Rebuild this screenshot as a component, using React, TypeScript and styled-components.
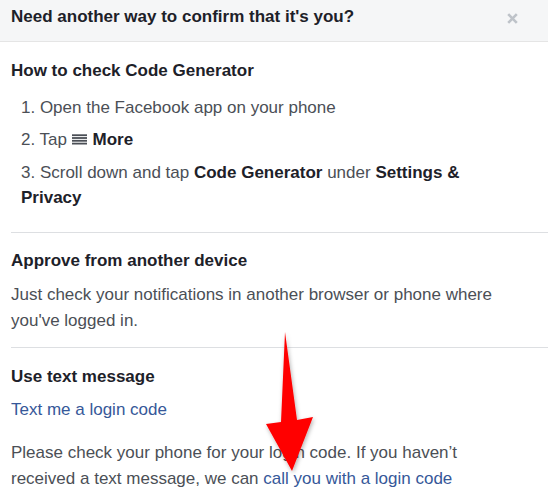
import React from "react";
import styled, { createGlobalStyle } from "styled-components";

const Global = createGlobalStyle`
  html, body { margin: 0; padding: 0; background: #ffffff; }
  body { font-family: "Liberation Sans", Arial, sans-serif; -webkit-font-smoothing: antialiased; }
  * { box-sizing: border-box; }
`;

const Page = styled.div`
  position: relative;
  width: 548px;
  height: 500px;
  overflow: hidden;
  background: #ffffff;
`;

const Header = styled.div`
  height: 42px;
  display: flex;
  align-items: flex-start;
  justify-content: space-between;
  padding: 6px 30px 0 11px;
  background: #f5f6f7;
  border-bottom: 1px solid #e5e5e5;
`;

const Title = styled.h1`
  margin: 0;
  font-size: 17px;
  line-height: 21px;
  font-weight: bold;
  color: #1d2129;
`;

const Close = styled.svg`
  width: 11px;
  height: 11px;
  margin-top: 7px;
`;

const Body = styled.div`
  padding-left: 11px;
`;

const Section = styled.section<{ $pb: number; $last?: boolean }>`
  padding: 17.5px 0 ${(p) => p.$pb}px 0;
  border-bottom: ${(p) => (p.$last ? "none" : "1px solid #dddfe2")};
`;

const Heading = styled.h2<{ $mb: number }>`
  margin: 0 0 ${(p) => p.$mb}px 0;
  font-size: 17px;
  line-height: 21px;
  font-weight: bold;
  color: #1d2129;
`;

const Steps = styled.ol`
  margin: 0;
  padding: 0 0 0 10px;
  max-width: 500px;
  list-style: none;
  display: flex;
  flex-direction: column;
  gap: 7.5px;
`;

const Step = styled.li`
  font-size: 17px;
  line-height: 25px;
  color: #4b4f56;
`;

const Strong = styled.b`
  color: #1d2129;
  font-weight: bold;
`;

const Para = styled.p<{ $mt?: number }>`
  margin: ${(p) => p.$mt ?? 0}px 0 0 0;
  max-width: 500px;
  font-size: 17px;
  line-height: 25.7px;
  color: #4b4f56;
`;

const Link = styled.a`
  color: #365899;
  text-decoration: none;
  cursor: pointer;
`;

const LinkLine = styled.div`
  font-size: 17px;
  line-height: 25.7px;
`;

const Menu = styled.svg`
  width: 15px;
  height: 11px;
  margin: 0 1px 0 0;
  vertical-align: 0px;
`;

const Overlay = styled.svg`
  position: absolute;
  left: 0;
  top: 0;
  pointer-events: none;
`;

export default function App() {
  return (
    <Page>
      <Global />
      <Header>
        <Title>Need another way to confirm that it's you?</Title>
        <Close viewBox="0 0 11 11">
          <path d="M1.2 1.2 L9.8 9.8 M9.8 1.2 L1.2 9.8" stroke="#bec3c9" strokeWidth="2.6" strokeLinecap="butt" />
        </Close>
      </Header>
      <Body>
        <Section $pb={22}>
          <Heading $mb={14}>How to check Code Generator</Heading>
          <Steps>
            <Step>1. Open the Facebook app on your phone</Step>
            <Step>
              2. Tap{" "}
              <Menu viewBox="0 0 15 11">
                <rect x="0" y="0.3" width="15" height="1.8" fill="#4b4f56" />
                <rect x="0" y="3.1" width="15" height="1.8" fill="#4b4f56" />
                <rect x="0" y="5.9" width="15" height="1.8" fill="#4b4f56" />
                <rect x="0" y="8.7" width="15" height="1.8" fill="#4b4f56" />
              </Menu>{" "}
              <Strong>More</Strong>
            </Step>
            <Step>
              3. Scroll down and tap <Strong>Code Generator</Strong> under <Strong>Settings &amp; Privacy</Strong>
            </Step>
          </Steps>
        </Section>
        <Section $pb={14}>
          <Heading $mb={11}>Approve from another device</Heading>
          <Para>Just check your notifications in another browser or phone where you've logged in.</Para>
        </Section>
        <Section $pb={20} $last>
          <Heading $mb={10}>Use text message</Heading>
          <LinkLine>
            <Link>Text me a login code</Link>
          </LinkLine>
          <Para $mt={17.5}>
            Please check your phone for your login code. If you haven’t received a text message, we can{" "}
            <Link>call you with a login code</Link>
          </Para>
        </Section>
      </Body>
      <Overlay width="548" height="500" viewBox="0 0 548 500">
        <defs>
          <filter id="sh" x="-50%" y="-20%" width="200%" height="140%">
            <feDropShadow dx="1" dy="2" stdDeviation="2" floodColor="#000" floodOpacity="0.3" />
          </filter>
        </defs>
        <polygon
          points="285,332 297,420 313,417 292,471 266,424 281,422"
          fill="#ff0000"
          filter="url(#sh)"
        />
      </Overlay>
    </Page>
  );
}
